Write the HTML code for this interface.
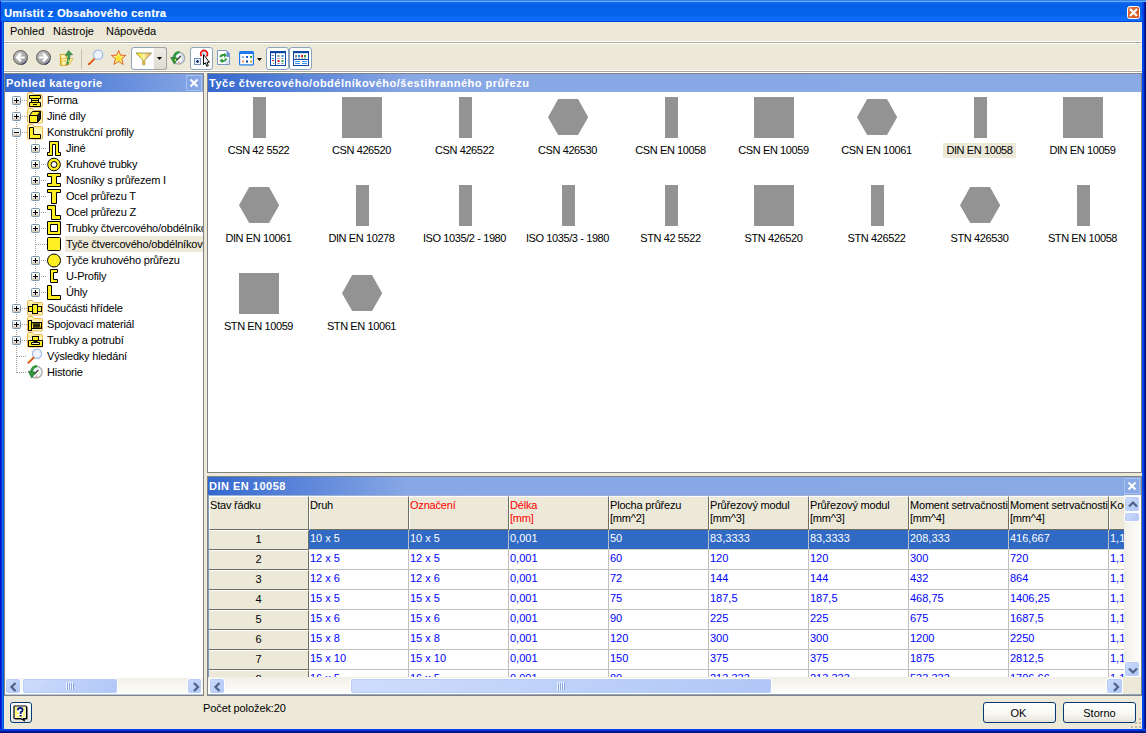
<!DOCTYPE html>
<html><head><meta charset="utf-8">
<style>
*{box-sizing:border-box;margin:0;padding:0}
html,body{width:1146px;height:733px;overflow:hidden;background:#ECE9D8;font-family:"Liberation Sans",sans-serif;font-size:11px;color:#000}
.a{position:absolute}
#title{left:0;top:0;width:1146px;height:22px;background:linear-gradient(to bottom,#3C82E6 0,#3C82E6 1px,#64B0FF 1px,#64B0FF 2px,#1A6EF5 2px,#0561E8 4px,#0561E8 15px,#0A6CF8 17px,#0A6CF8 21px,#0046DA 21px,#0046DA 22px)}
#title .t{left:4px;top:5px;color:#fff;font-weight:bold;font-size:11px;line-height:16px;white-space:nowrap;letter-spacing:0.4px;text-shadow:0.5px 0 0 rgba(255,255,255,0.5)}
#fl{left:0;top:22px;width:4px;height:711px;background:linear-gradient(to right,#0012CF 0,#0012CF 1px,#0A2ED5 1px,#0A2ED5 2px,#156DE8 2px,#156DE8 3px,#0055E5 3px)}
#fr{left:1142px;top:2px;width:4px;height:731px;background:linear-gradient(to right,#0048F0 0,#0048F0 1px,#0040E0 1px,#0040E0 2px,#001CA0 2px,#001CA0 3px,#001080 3px)}
#fb{left:0;top:729px;width:1146px;height:4px;background:linear-gradient(to bottom,#0040F0 0,#0040F0 1px,#0038D8 1px,#0038D8 2px,#001890 2px,#001890 3px,#001080 3px)}
.hl{height:1px;left:4px;width:1138px}
.menu span{position:absolute;top:25px;line-height:13px;font-size:11px;white-space:nowrap}
.panel{border:1px solid #828282;background:#fff}
.tt{font-size:11px;line-height:14px;white-space:nowrap;letter-spacing:-0.2px}
.gl{text-align:center;font-size:11px;line-height:14px;white-space:nowrap;letter-spacing:-0.4px}
.hc{background:#ECE9D8;border-top:1px solid #fff;border-left:1px solid #fff;border-right:1px solid #716F64;border-bottom:1px solid #716F64;padding:2px 0 0 0;font-size:11px;line-height:13px;white-space:nowrap;overflow:hidden;letter-spacing:-0.2px}
.rh{background:#ECE9D8;border-top:1px solid #fff;border-right:1px solid #716F64;border-bottom:1px solid #716F64;text-align:center;font-size:11px;line-height:17px;padding-left:0}
.dc{border-right:1px solid #C0C0C0;border-bottom:1px solid #C0C0C0;color:#0000FF;font-size:11px;line-height:16px;padding-left:1px;white-space:nowrap;overflow:hidden;letter-spacing:0}
.dc.sel{background:#316AC5;color:#fff;border-bottom-color:#D8D4C8}
.trh{background:linear-gradient(to bottom,#F1EFE8,#FEFEFB)}
.trv{background:linear-gradient(to right,#F1EFE8,#FEFEFB)}
.sb{border:1px solid #fff;border-radius:3px;background:linear-gradient(135deg,#CFDCFC 0,#BBCFF8 60%,#B0C6F6 100%);box-shadow:inset 0 0 0 1px #B9CCF6}
.xb{border:1px solid #003C74;border-radius:3px;background:linear-gradient(to bottom,#FFFFFF 0,#F6F6F2 60%,#E6E3D8 100%);font-size:11px}
.phdr{left:1px;top:0;height:18px;color:#fff;font-weight:bold;font-size:11px;line-height:18px;padding-left:1px;white-space:nowrap;letter-spacing:0.5px}
</style></head><body>
<div id="title" class="a"><div class="t a">Umístit z Obsahového centra</div></div>
<div id="fl" class="a"></div><div class="a" style="left:0;top:1px;width:1px;height:21px;background:#0A28C8"></div><div id="fr" class="a"></div><div id="fb" class="a"></div>

<!-- menu -->
<div class="menu">
<span style="left:10px">Pohled</span><span style="left:53px">Nástroje</span><span style="left:106px">Nápověda</span>
</div>
<div class="a hl" style="top:41px;background:#fff"></div>
<div class="a hl" style="top:42px;background:#ACA899"></div>
<div class="a hl" style="top:43px;background:#fff"></div>
<div class="a hl" style="top:70px;background:#fff"></div>
<div class="a hl" style="top:71px;background:#ACA899"></div>
<div class="a hl" style="top:72px;background:#fff"></div>


<!-- title close -->
<svg class="a" style="left:1127px;top:6px" width="13" height="13" viewBox="0 0 13 13">
<defs><linearGradient id="cbg" x1="0" y1="0" x2="1" y2="1"><stop offset="0" stop-color="#E8906A"/><stop offset="0.35" stop-color="#D6642C"/><stop offset="0.8" stop-color="#D65A28"/><stop offset="1" stop-color="#F02010"/></linearGradient></defs>
<rect x="0.5" y="0.5" width="12" height="12" rx="2" fill="url(#cbg)" stroke="#fff"/>
<path d="M3.8 3.8 L9.2 9.2 M9.2 3.8 L3.8 9.2" stroke="#fff" stroke-width="2.3" stroke-linecap="square"/>
</svg>

<!-- toolbar -->
<svg class="a" style="left:13px;top:50px" width="16" height="16" viewBox="0 0 16 16">
<defs><radialGradient id="gc" cx="0.35" cy="0.3" r="0.8"><stop offset="0" stop-color="#C4C4C4"/><stop offset="0.6" stop-color="#A6A6A6"/><stop offset="1" stop-color="#8E8E8E"/></radialGradient></defs>
<circle cx="7.5" cy="7.5" r="7" fill="url(#gc)" stroke="#5E5E56" stroke-width="1"/>
<path d="M13.56 11 A7 7 0 0 1 8.7 14.4" stroke="#33406E" stroke-width="1.1" fill="none"/>
<path d="M4.5 7.5 H11.8" stroke="#fff" stroke-width="2"/>
<path d="M8 3.6 L4.1 7.5 L8 11.4" stroke="#fff" stroke-width="2.3" fill="none" stroke-linejoin="miter"/>
</svg>
<svg class="a" style="left:36px;top:50px" width="16" height="16" viewBox="0 0 16 16">
<circle cx="7.5" cy="7.5" r="7" fill="url(#gc)" stroke="#5E5E56" stroke-width="1"/>
<path d="M13.56 11 A7 7 0 0 1 8.7 14.4" stroke="#33406E" stroke-width="1.1" fill="none"/>
<path d="M3.2 7.5 H10.5" stroke="#fff" stroke-width="2"/>
<path d="M7 3.6 L10.9 7.5 L7 11.4" stroke="#fff" stroke-width="2.3" fill="none" stroke-linejoin="miter"/>
</svg>
<svg class="a" style="left:59px;top:49px" width="16" height="18" viewBox="0 0 16 18">
<path d="M1.5 5.5 H7.5 V16.5 H1.5 Z" fill="#FDF6C0" stroke="#D8A828" stroke-width="1.2"/>
<path d="M2.5 9.5 L14 9.5 L10.5 15.5 L2.5 16.5 Z" fill="#FBF3A8" stroke="#E8B848" stroke-width="0.9"/>
<path d="M4 12 H7" stroke="#F0B050" stroke-width="1"/>
<path d="M7.5 15.5 C8 12 9 9 9.2 6 L6.2 6.8 L9.5 1.5 L13.8 5.6 L11 6 C11 9 10 13 9 15.5 Z" fill="#3A9E4A" stroke="#2C6A3A" stroke-width="0.5"/>
<path d="M9.5 11 V13" stroke="#D8E870" stroke-width="0.9"/>
</svg>
<div class="a" style="left:81px;top:49px;width:1px;height:20px;background:#C5C2B2"></div>
<svg class="a" style="left:87px;top:49px" width="18" height="17" viewBox="0 0 18 17">
<circle cx="11.1" cy="5.8" r="4.6" fill="#EEF3FD" stroke="#A4BCE6" stroke-width="1.3"/>
<path d="M2 15 L6.8 10.3" stroke="#D84A18" stroke-width="2.2" stroke-linecap="round"/>
<path d="M1.6 14.3 L6.2 9.8" stroke="#F4E060" stroke-width="0.9"/>
</svg>
<svg class="a" style="left:110px;top:49px" width="17" height="17" viewBox="0 0 17 17">
<defs><radialGradient id="stg" cx="0.5" cy="0.55" r="0.5"><stop offset="0" stop-color="#F6E010"/><stop offset="0.6" stop-color="#FBF080"/><stop offset="1" stop-color="#FFFCE0"/></radialGradient></defs>
<path d="M8.7 1.5 L10.6 6.2 L15.8 6.4 L11.8 9.6 L13.2 15.5 L8.6 12.3 L4 15.5 L5.4 9.6 L1.4 6.4 L6.6 6.2 Z" fill="url(#stg)" stroke="#E4641C" stroke-width="1" stroke-linejoin="round"/>
</svg>
<div class="a" style="left:131px;top:47px;width:36px;height:23px;border:1px solid #8DA3BE;border-radius:3px;background:linear-gradient(to right,#fff 0,#fff 22px,#E3E1D8 22px);overflow:hidden"></div>
<div class="a" style="left:153px;top:47px;width:14px;height:23px;border:1px solid #A3A3A0;border-left:none;border-radius:0 3px 3px 0;background:linear-gradient(to bottom,#EDEBE4,#DEDCD2)"></div>
<div class="a" style="left:153px;top:48px;width:1px;height:21px;background:#FAFAF8"></div>
<svg class="a" style="left:135px;top:52px" width="18" height="14" viewBox="0 0 18 14">
<defs><linearGradient id="fng" x1="0" y1="0" x2="1" y2="0"><stop offset="0" stop-color="#F8E000"/><stop offset="0.5" stop-color="#FAF2A0"/><stop offset="1" stop-color="#E8A040"/></linearGradient></defs>
<path d="M1 1 L16.5 1 L9.8 8.2 L9.8 12.8 L7.8 12.8 L7.8 8.2 Z" fill="url(#fng)" stroke="#6E6420" stroke-width="0.6" stroke-linejoin="round"/>
<rect x="7.9" y="8.2" width="1.8" height="4.5" fill="#E0B030"/>
</svg>
<svg class="a" style="left:157px;top:57px" width="5" height="3" viewBox="0 0 5 3"><path d="M0 0 H5 L2.5 3 Z" fill="#000"/></svg>
<svg class="a" style="left:169px;top:50px" width="17" height="16" viewBox="0 0 17 16">
<circle cx="9.7" cy="8.1" r="5.9" fill="#F2F7FE" stroke="#ABABAB" stroke-width="1.3"/>
<path d="M12 4 A5 5 0 0 1 12.5 12" stroke="#B8D0F0" stroke-width="1.2" fill="none"/>
<path d="M7.6 10.2 L11.8 6" stroke="#3A3A3A" stroke-width="1.3"/>
<circle cx="12.6" cy="8.5" r="0.7" fill="#F4F080"/><circle cx="10" cy="12.3" r="0.7" fill="#E86040"/>
<path d="M10.5 2.2 C7 2.2 5.5 4.5 5.3 8" stroke="#2E9A3C" stroke-width="2.6" fill="none"/>
<path d="M1.5 7.3 L9 8.2 L5.3 14.2 Z" fill="#2E9A3C" stroke="#1E5A28" stroke-width="0.5"/>
<rect x="6" y="9" width="1" height="2" fill="#F0E060"/>
</svg>
<div class="a" style="left:190px;top:47px;width:23px;height:23px;border:1px solid #8DA3BE;border-radius:3px;background:#fff"></div>
<svg class="a" style="left:193px;top:49px" width="19" height="19" viewBox="0 0 19 19">
<path d="M8.6 7.2 A3.4 3.4 0 1 1 13.4 7.4" fill="none" stroke="#F01818" stroke-width="1.8"/>
<circle cx="11" cy="4.8" r="2" fill="#C8DCF4"/>
<rect x="1.5" y="9.5" width="6" height="6" fill="#F0F4FC" stroke="#7890B8" stroke-width="1"/>
<path d="M4.5 11 V14 M3 12.5 H6" stroke="#0A3A8A" stroke-width="1.3"/>
<path d="M10.5 5.5 L10.5 15.5 L12.3 13.8 L13.8 17.3 L15.3 16.7 L13.9 13.3 L16.4 13.3 Z" fill="#fff" stroke="#000" stroke-width="1" stroke-linejoin="miter"/>
</svg>
<svg class="a" style="left:216px;top:50px" width="15" height="16" viewBox="0 0 15 16">
<path d="M1.5 0.5 L10.5 0.5 L13.5 3.5 L13.5 14.5 L1.5 14.5 Z" fill="#fff" stroke="#7A98C4" stroke-width="1"/>
<path d="M10.5 0.5 L13.5 3.5 L13.5 7 L10.5 7 Z" fill="#6A90DC"/>
<path d="M9 10 L13 10 L13 14 L9 14 Z" fill="#D8E4F8"/>
<path d="M3.5 7 C3.5 4.5 6 4 8 4 L8 2.8 L11 5.2 L8 7.8 L8 6 C6.5 6 5.5 6.5 5.5 7.5 Z" fill="#2E9A3C"/>
<path d="M11 8 C11 10.5 8.5 12 6.5 12 L6.5 13.2 L3.5 10.8 L6.5 8.2 L6.5 10 C8 10 9 9.5 9 8.5 Z" fill="#2E9A3C"/>
</svg>
<svg class="a" style="left:238px;top:50px" width="17" height="16" viewBox="0 0 17 16">
<rect x="1" y="1" width="15" height="14.5" rx="1.5" fill="#1E78EC"/>
<rect x="2.2" y="4" width="12.6" height="10.3" fill="#fff"/>
<rect x="4" y="6" width="2" height="2" fill="#9AB0D0"/><rect x="8" y="6" width="2" height="2" fill="#1A60E0"/><rect x="12" y="6" width="2" height="2" fill="#3A9A40"/>
<rect x="4" y="10.5" width="2" height="2" fill="#F0907A"/><rect x="8" y="10.5" width="2" height="2" fill="#0A3A8A"/><rect x="12" y="10.5" width="2" height="2" fill="#D8A828"/>
</svg>
<svg class="a" style="left:257px;top:58px" width="5" height="3" viewBox="0 0 5 3"><path d="M0 0 H5 L2.5 3 Z" fill="#000"/></svg>
<div class="a" style="left:266px;top:47px;width:23px;height:23px;border:1px solid #8DA3BE;border-radius:3px;background:#fff"></div>
<div class="a" style="left:289px;top:47px;width:23px;height:23px;border:1px solid #8DA3BE;border-radius:3px;background:#fff"></div>
<svg class="a" style="left:270px;top:51px" width="16" height="15" viewBox="0 0 16 15">
<rect x="0.5" y="0.5" width="15" height="14" fill="#fff" stroke="#0C48A8" stroke-width="1"/>
<rect x="0" y="0" width="16" height="2.2" fill="#0C48A8"/>
<path d="M5.5 2 V15" stroke="#0C48A8" stroke-width="1"/>
<rect x="1.5" y="4" width="2.5" height="1" fill="#6A7FA8"/><rect x="1.5" y="7" width="2.5" height="1" fill="#3A90F0"/><rect x="2" y="9" width="2" height="1" fill="#E02020"/><rect x="3" y="12" width="1" height="1" fill="#30A030"/>
<rect x="7.5" y="4" width="2" height="2" fill="#7A8CA8"/><rect x="11.5" y="4" width="2" height="2" fill="#2A8AF8"/>
<rect x="7.5" y="7" width="2" height="1" fill="#888"/><rect x="11.5" y="7" width="2" height="1" fill="#888"/>
<rect x="7.5" y="9" width="2" height="2" fill="#E01818"/><rect x="11.5" y="9" width="2" height="2" fill="#30A040"/>
<rect x="7.5" y="12" width="2" height="1" fill="#888"/><rect x="11.5" y="12" width="2" height="1" fill="#888"/>
</svg>
<svg class="a" style="left:293px;top:51px" width="16" height="15" viewBox="0 0 16 15">
<rect x="0.5" y="0.5" width="15" height="14" fill="#fff" stroke="#0C48A8" stroke-width="1"/>
<rect x="0" y="0" width="16" height="2.2" fill="#0C48A8"/>
<path d="M0 8.5 H16" stroke="#0C48A8" stroke-width="1"/>
<rect x="2" y="4" width="2" height="2" fill="#7A8CA8"/><rect x="5" y="4" width="2" height="2" fill="#2A8AF8"/><rect x="8" y="4" width="2" height="2" fill="#E01818"/><rect x="11" y="4" width="2" height="2" fill="#30A040"/>
<rect x="2" y="6.5" width="2" height="1" fill="#888"/><rect x="5" y="6.5" width="2" height="1" fill="#888"/><rect x="8" y="6.5" width="2" height="1" fill="#888"/><rect x="11" y="6.5" width="2" height="1" fill="#888"/>
<rect x="2" y="10" width="5" height="1" fill="#3A90F0"/><rect x="9" y="10" width="5" height="1" fill="#3A90F0"/>
<rect x="2" y="12" width="5" height="1" fill="#3A90F0"/><rect x="9" y="12" width="5" height="1" fill="#3A90F0"/>
</svg>

<!-- left panel -->
<div class="a panel" style="left:4px;top:73px;width:200px;height:623px"></div>
<!-- right top panel -->
<div class="a panel" style="left:207px;top:73px;width:935px;height:400px"></div>
<!-- right bottom panel -->
<div class="a panel" style="left:207px;top:476px;width:935px;height:220px"></div>


<div class="a phdr" style="left:5px;top:74px;width:198px;background:linear-gradient(to right,#3468CF 0,#88A7E5 198px)">Pohled kategorie</div>
<svg class="a" style="left:186px;top:75px" width="16" height="16" viewBox="0 0 16 16"><rect x="0.5" y="0.5" width="15" height="15" fill="none" stroke="#A8C0EE" stroke-width="1"/><path d="M4.5 4.5 L11.5 11.5 M11.5 4.5 L4.5 11.5" stroke="#fff" stroke-width="2"/></svg>
<div class="a phdr" style="left:208px;top:74px;width:933px;background:linear-gradient(to right,#3468CF 0,#88A7E5 200px,#8AAAE6 100%)">Tyče čtvercového/obdélníkového/šestihranného průřezu</div>
<div class="a phdr" style="left:208px;top:477px;width:933px;background:linear-gradient(to right,#3468CF 0,#88A7E5 200px,#8AAAE6 100%)">DIN EN 10058</div>
<svg class="a" style="left:1124px;top:478px" width="16" height="16" viewBox="0 0 16 16"><rect x="0.5" y="0.5" width="15" height="15" fill="none" stroke="#A8C0EE" stroke-width="1"/><path d="M4.5 4.5 L11.5 11.5 M11.5 4.5 L4.5 11.5" stroke="#fff" stroke-width="2"/></svg>
<!-- table -->
<div class="a" style="left:208px;top:495px;width:916px;height:182px;overflow:hidden;background:#fff;border-top:1px solid #9EB2D6;border-left:1px solid #7F9DB9">
<div class="a hc" style="left:0;top:0;width:100px;height:34px">Stav řádku</div>
<div class="a hc" style="left:100px;top:0;width:100px;height:34px;">Druh</div>
<div class="a hc" style="left:200px;top:0;width:100px;height:34px;color:#f00">Označení</div>
<div class="a hc" style="left:300px;top:0;width:100px;height:34px;color:#f00">Délka<br>[mm]</div>
<div class="a hc" style="left:400px;top:0;width:100px;height:34px;">Plocha průřezu<br>[mm^2]</div>
<div class="a hc" style="left:500px;top:0;width:100px;height:34px;">Průřezový modul<br>[mm^3]</div>
<div class="a hc" style="left:600px;top:0;width:100px;height:34px;">Průřezový modul<br>[mm^3]</div>
<div class="a hc" style="left:700px;top:0;width:100px;height:34px;">Moment setrvačnosti<br>[mm^4]</div>
<div class="a hc" style="left:800px;top:0;width:100px;height:34px;">Moment setrvačnosti<br>[mm^4]</div>
<div class="a hc" style="left:900px;top:0;width:100px;height:34px;">Koeficient</div>
<div class="a rh" style="left:0;top:34px;width:100px;height:20px">1</div>
<div class="a dc sel" style="left:100px;top:34px;width:100px;height:20px">10 x 5</div>
<div class="a dc sel" style="left:200px;top:34px;width:100px;height:20px">10 x 5</div>
<div class="a dc sel" style="left:300px;top:34px;width:100px;height:20px">0,001</div>
<div class="a dc sel" style="left:400px;top:34px;width:100px;height:20px">50</div>
<div class="a dc sel" style="left:500px;top:34px;width:100px;height:20px">83,3333</div>
<div class="a dc sel" style="left:600px;top:34px;width:100px;height:20px">83,3333</div>
<div class="a dc sel" style="left:700px;top:34px;width:100px;height:20px">208,333</div>
<div class="a dc sel" style="left:800px;top:34px;width:100px;height:20px">416,667</div>
<div class="a dc sel" style="left:900px;top:34px;width:100px;height:20px">1,1</div>
<div class="a rh" style="left:0;top:54px;width:100px;height:20px">2</div>
<div class="a dc" style="left:100px;top:54px;width:100px;height:20px">12 x 5</div>
<div class="a dc" style="left:200px;top:54px;width:100px;height:20px">12 x 5</div>
<div class="a dc" style="left:300px;top:54px;width:100px;height:20px">0,001</div>
<div class="a dc" style="left:400px;top:54px;width:100px;height:20px">60</div>
<div class="a dc" style="left:500px;top:54px;width:100px;height:20px">120</div>
<div class="a dc" style="left:600px;top:54px;width:100px;height:20px">120</div>
<div class="a dc" style="left:700px;top:54px;width:100px;height:20px">300</div>
<div class="a dc" style="left:800px;top:54px;width:100px;height:20px">720</div>
<div class="a dc" style="left:900px;top:54px;width:100px;height:20px">1,1</div>
<div class="a rh" style="left:0;top:74px;width:100px;height:20px">3</div>
<div class="a dc" style="left:100px;top:74px;width:100px;height:20px">12 x 6</div>
<div class="a dc" style="left:200px;top:74px;width:100px;height:20px">12 x 6</div>
<div class="a dc" style="left:300px;top:74px;width:100px;height:20px">0,001</div>
<div class="a dc" style="left:400px;top:74px;width:100px;height:20px">72</div>
<div class="a dc" style="left:500px;top:74px;width:100px;height:20px">144</div>
<div class="a dc" style="left:600px;top:74px;width:100px;height:20px">144</div>
<div class="a dc" style="left:700px;top:74px;width:100px;height:20px">432</div>
<div class="a dc" style="left:800px;top:74px;width:100px;height:20px">864</div>
<div class="a dc" style="left:900px;top:74px;width:100px;height:20px">1,1</div>
<div class="a rh" style="left:0;top:94px;width:100px;height:20px">4</div>
<div class="a dc" style="left:100px;top:94px;width:100px;height:20px">15 x 5</div>
<div class="a dc" style="left:200px;top:94px;width:100px;height:20px">15 x 5</div>
<div class="a dc" style="left:300px;top:94px;width:100px;height:20px">0,001</div>
<div class="a dc" style="left:400px;top:94px;width:100px;height:20px">75</div>
<div class="a dc" style="left:500px;top:94px;width:100px;height:20px">187,5</div>
<div class="a dc" style="left:600px;top:94px;width:100px;height:20px">187,5</div>
<div class="a dc" style="left:700px;top:94px;width:100px;height:20px">468,75</div>
<div class="a dc" style="left:800px;top:94px;width:100px;height:20px">1406,25</div>
<div class="a dc" style="left:900px;top:94px;width:100px;height:20px">1,1</div>
<div class="a rh" style="left:0;top:114px;width:100px;height:20px">5</div>
<div class="a dc" style="left:100px;top:114px;width:100px;height:20px">15 x 6</div>
<div class="a dc" style="left:200px;top:114px;width:100px;height:20px">15 x 6</div>
<div class="a dc" style="left:300px;top:114px;width:100px;height:20px">0,001</div>
<div class="a dc" style="left:400px;top:114px;width:100px;height:20px">90</div>
<div class="a dc" style="left:500px;top:114px;width:100px;height:20px">225</div>
<div class="a dc" style="left:600px;top:114px;width:100px;height:20px">225</div>
<div class="a dc" style="left:700px;top:114px;width:100px;height:20px">675</div>
<div class="a dc" style="left:800px;top:114px;width:100px;height:20px">1687,5</div>
<div class="a dc" style="left:900px;top:114px;width:100px;height:20px">1,1</div>
<div class="a rh" style="left:0;top:134px;width:100px;height:20px">6</div>
<div class="a dc" style="left:100px;top:134px;width:100px;height:20px">15 x 8</div>
<div class="a dc" style="left:200px;top:134px;width:100px;height:20px">15 x 8</div>
<div class="a dc" style="left:300px;top:134px;width:100px;height:20px">0,001</div>
<div class="a dc" style="left:400px;top:134px;width:100px;height:20px">120</div>
<div class="a dc" style="left:500px;top:134px;width:100px;height:20px">300</div>
<div class="a dc" style="left:600px;top:134px;width:100px;height:20px">300</div>
<div class="a dc" style="left:700px;top:134px;width:100px;height:20px">1200</div>
<div class="a dc" style="left:800px;top:134px;width:100px;height:20px">2250</div>
<div class="a dc" style="left:900px;top:134px;width:100px;height:20px">1,1</div>
<div class="a rh" style="left:0;top:154px;width:100px;height:20px">7</div>
<div class="a dc" style="left:100px;top:154px;width:100px;height:20px">15 x 10</div>
<div class="a dc" style="left:200px;top:154px;width:100px;height:20px">15 x 10</div>
<div class="a dc" style="left:300px;top:154px;width:100px;height:20px">0,001</div>
<div class="a dc" style="left:400px;top:154px;width:100px;height:20px">150</div>
<div class="a dc" style="left:500px;top:154px;width:100px;height:20px">375</div>
<div class="a dc" style="left:600px;top:154px;width:100px;height:20px">375</div>
<div class="a dc" style="left:700px;top:154px;width:100px;height:20px">1875</div>
<div class="a dc" style="left:800px;top:154px;width:100px;height:20px">2812,5</div>
<div class="a dc" style="left:900px;top:154px;width:100px;height:20px">1,1</div>
<div class="a rh" style="left:0;top:174px;width:100px;height:20px">8</div>
<div class="a dc" style="left:100px;top:174px;width:100px;height:20px">16 x 5</div>
<div class="a dc" style="left:200px;top:174px;width:100px;height:20px">16 x 5</div>
<div class="a dc" style="left:300px;top:174px;width:100px;height:20px">0,001</div>
<div class="a dc" style="left:400px;top:174px;width:100px;height:20px">80</div>
<div class="a dc" style="left:500px;top:174px;width:100px;height:20px">213,333</div>
<div class="a dc" style="left:600px;top:174px;width:100px;height:20px">213,333</div>
<div class="a dc" style="left:700px;top:174px;width:100px;height:20px">533,333</div>
<div class="a dc" style="left:800px;top:174px;width:100px;height:20px">1706,66</div>
<div class="a dc" style="left:900px;top:174px;width:100px;height:20px">1,1</div>
</div>
<!-- scrollbars -->
<div class="a trh" style="left:5px;top:678px;width:198px;height:17px"></div>
<div class="a sb" style="left:5px;top:678px;width:16px;height:16px"><svg class="a" style="left:0;top:0" width="16" height="16"><path d="M9.5 4.0 L5.5 8.0 L9.5 12.0" stroke="#4D6185" stroke-width="2.2" fill="none"/></svg></div>
<div class="a sb" style="left:22px;top:678px;width:96px;height:16px"></div>
<svg class="a" style="left:66px;top:682px" width="8" height="8"><path d="M0.5 0 V8 M2.5 0 V8 M4.5 0 V8 M6.5 0 V8" stroke="#EEF4FE" stroke-width="1"/><path d="M1.5 1 V9 M3.5 1 V9 M5.5 1 V9 M7.5 1 V9" stroke="#8CA8DE" stroke-width="1"/></svg>
<div class="a sb" style="left:187px;top:678px;width:15px;height:16px"><svg class="a" style="left:0;top:0" width="15" height="16"><path d="M6.0 4.0 L10.0 8.0 L6.0 12.0" stroke="#4D6185" stroke-width="2.2" fill="none"/></svg></div>
<div class="a trv" style="left:1124px;top:495px;width:17px;height:182px"></div>
<div class="a sb" style="left:1124px;top:496px;width:16px;height:16px"><svg class="a" style="left:0;top:0" width="16" height="16"><path d="M4.0 9.5 L8.0 5.5 L12.0 9.5" stroke="#4D6185" stroke-width="2.2" fill="none"/></svg></div>
<div class="a sb" style="left:1124px;top:512px;width:16px;height:10px"></div>
<div class="a sb" style="left:1124px;top:661px;width:16px;height:16px"><svg class="a" style="left:0;top:0" width="16" height="16"><path d="M4.0 6.5 L8.0 10.5 L12.0 6.5" stroke="#4D6185" stroke-width="2.2" fill="none"/></svg></div>
<div class="a trh" style="left:208px;top:677px;width:916px;height:17px"></div>
<div class="a sb" style="left:209px;top:678px;width:16px;height:16px"><svg class="a" style="left:0;top:0" width="16" height="16"><path d="M9.5 4.0 L5.5 8.0 L9.5 12.0" stroke="#4D6185" stroke-width="2.2" fill="none"/></svg></div>
<div class="a sb" style="left:350px;top:678px;width:422px;height:16px"></div>
<svg class="a" style="left:557px;top:682px" width="8" height="8"><path d="M0.5 0 V8 M2.5 0 V8 M4.5 0 V8 M6.5 0 V8" stroke="#EEF4FE" stroke-width="1"/><path d="M1.5 1 V9 M3.5 1 V9 M5.5 1 V9 M7.5 1 V9" stroke="#8CA8DE" stroke-width="1"/></svg>
<div class="a sb" style="left:1106px;top:678px;width:17px;height:16px"><svg class="a" style="left:0;top:0" width="17" height="16"><path d="M7.0 4.0 L11.0 8.0 L7.0 12.0" stroke="#4D6185" stroke-width="2.2" fill="none"/></svg></div>
<div class="a" style="left:1123px;top:677px;width:18px;height:18px;background:#ECE9D8"></div>
<div class="a" style="left:208px;top:694px;width:933px;height:1px;background:#8FA4C4"></div>
<div class="a" style="left:5px;top:694px;width:198px;height:1px;background:#B8C8E8"></div>
<!-- bottom -->
<div class="a xb" style="left:10px;top:702px;width:22px;height:21px"></div>
<svg class="a" style="left:13px;top:705px" width="16" height="17" viewBox="0 0 16 17">
<path d="M2 1.5 H13.5 Q14.5 1.5 14.5 2.5 V13.5 Q14.5 14.5 13.5 14.5 H11.5 L12 16 L9 14.5 H2.5 Q1.5 14.5 1.5 13.5 V2.5 Q1.5 1.5 2.5 1.5 Z" fill="#222" />
<path d="M1.5 1 H12.5 Q13.5 1 13.5 2 V12.5 Q13.5 13.5 12.5 13.5 H10.5 L11 15.5 L8 13.5 H2 Q1 13.5 1 12.5 V2 Q1 1 2 1 Z" fill="#fff" stroke="#000" stroke-width="1.2"/>
<g fill="#FFF000"><circle cx="3" cy="3" r="0.9"/><circle cx="3" cy="5" r="0.85"/><circle cx="3" cy="7" r="0.85"/><circle cx="3" cy="9" r="0.85"/><circle cx="3" cy="11" r="0.85"/><circle cx="5" cy="4" r="0.85"/><circle cx="5" cy="8" r="0.85"/><circle cx="5" cy="12" r="0.85"/><circle cx="7" cy="3" r="0.85"/><circle cx="7" cy="11" r="0.85"/><circle cx="9" cy="4" r="0.85"/><circle cx="9" cy="12" r="0.85"/><circle cx="11" cy="3" r="0.85"/><circle cx="11" cy="5" r="0.85"/><circle cx="11" cy="7" r="0.85"/><circle cx="11" cy="9" r="0.85"/><circle cx="11" cy="11" r="0.85"/></g>
<path d="M4.8 5.2 Q4.8 3 7.2 3 Q9.6 3 9.6 5 Q9.6 6.5 7.8 7.2 L7.6 9" fill="none" stroke="#0A1A8A" stroke-width="1.8"/>
<rect x="6.6" y="10" width="2" height="1.6" fill="#0A1A8A"/>
</svg>
<div class="a" style="left:203px;top:701px;font-size:11px;line-height:14px;white-space:nowrap;letter-spacing:-0.1px">Počet položek:20</div>
<div class="a xb" style="left:983px;top:702px;width:73px;height:21px;text-align:center;line-height:21px;padding-right:2px">OK</div>
<div class="a xb" style="left:1063px;top:702px;width:73px;height:21px;text-align:center;line-height:21px">Storno</div>
<div class="a" style="left:1139px;top:718px;width:2px;height:2px;background:#BDB9A6"></div>
<div class="a" style="left:1139px;top:722px;width:2px;height:2px;background:#BDB9A6"></div>
<div class="a" style="left:1135px;top:722px;width:2px;height:2px;background:#BDB9A6"></div>
<div class="a" style="left:1139px;top:726px;width:2px;height:2px;background:#BDB9A6"></div>
<div class="a" style="left:1135px;top:726px;width:2px;height:2px;background:#BDB9A6"></div>
<div class="a" style="left:1131px;top:726px;width:2px;height:2px;background:#BDB9A6"></div>
<!-- grid -->
<div class="a" style="left:252.5px;top:97px;width:13px;height:41px;background:#939393"></div>
<div class="a gl" style="left:198.5px;top:143px;width:120px"><span style="display:inline-block;height:15px">CSN 42 5522</span></div>
<div class="a" style="left:342.0px;top:97px;width:40px;height:41px;background:#939393"></div>
<div class="a gl" style="left:301.5px;top:143px;width:120px"><span style="display:inline-block;height:15px">CSN 426520</span></div>
<div class="a" style="left:458.5px;top:97px;width:13px;height:41px;background:#939393"></div>
<div class="a gl" style="left:404.5px;top:143px;width:120px"><span style="display:inline-block;height:15px">CSN 426522</span></div>
<svg class="a" style="left:547.5px;top:98.8px" width="41" height="37" viewBox="0 0 41 37"><polygon points="0,18.2 10.2,0 30,0 40.2,18.2 30,36 10.2,36" fill="#939393"/></svg>
<div class="a gl" style="left:507.5px;top:143px;width:120px"><span style="display:inline-block;height:15px">CSN 426530</span></div>
<div class="a" style="left:664.5px;top:97px;width:13px;height:41px;background:#939393"></div>
<div class="a gl" style="left:610.5px;top:143px;width:120px"><span style="display:inline-block;height:15px">CSN EN 10058</span></div>
<div class="a" style="left:754.0px;top:97px;width:40px;height:41px;background:#939393"></div>
<div class="a gl" style="left:713.5px;top:143px;width:120px"><span style="display:inline-block;height:15px">CSN EN 10059</span></div>
<svg class="a" style="left:856.5px;top:98.8px" width="41" height="37" viewBox="0 0 41 37"><polygon points="0,18.2 10.2,0 30,0 40.2,18.2 30,36 10.2,36" fill="#939393"/></svg>
<div class="a gl" style="left:816.5px;top:143px;width:120px"><span style="display:inline-block;height:15px">CSN EN 10061</span></div>
<div class="a" style="left:973.5px;top:97px;width:13px;height:41px;background:#939393"></div>
<div class="a gl" style="left:919.5px;top:143px;width:120px"><span style="display:inline-block;height:15px;background:#ECE9D8;padding:0 3px">DIN EN 10058</span></div>
<div class="a" style="left:1063.0px;top:97px;width:40px;height:41px;background:#939393"></div>
<div class="a gl" style="left:1022.5px;top:143px;width:120px"><span style="display:inline-block;height:15px">DIN EN 10059</span></div>
<svg class="a" style="left:238.5px;top:186.8px" width="41" height="37" viewBox="0 0 41 37"><polygon points="0,18.2 10.2,0 30,0 40.2,18.2 30,36 10.2,36" fill="#939393"/></svg>
<div class="a gl" style="left:198.5px;top:231px;width:120px"><span style="display:inline-block;height:15px">DIN EN 10061</span></div>
<div class="a" style="left:355.5px;top:185px;width:13px;height:41px;background:#939393"></div>
<div class="a gl" style="left:301.5px;top:231px;width:120px"><span style="display:inline-block;height:15px">DIN EN 10278</span></div>
<div class="a" style="left:458.5px;top:185px;width:13px;height:41px;background:#939393"></div>
<div class="a gl" style="left:404.5px;top:231px;width:120px"><span style="display:inline-block;height:15px">ISO 1035/2 - 1980</span></div>
<div class="a" style="left:561.5px;top:185px;width:13px;height:41px;background:#939393"></div>
<div class="a gl" style="left:507.5px;top:231px;width:120px"><span style="display:inline-block;height:15px">ISO 1035/3 - 1980</span></div>
<div class="a" style="left:664.5px;top:185px;width:13px;height:41px;background:#939393"></div>
<div class="a gl" style="left:610.5px;top:231px;width:120px"><span style="display:inline-block;height:15px">STN 42 5522</span></div>
<div class="a" style="left:754.0px;top:185px;width:40px;height:41px;background:#939393"></div>
<div class="a gl" style="left:713.5px;top:231px;width:120px"><span style="display:inline-block;height:15px">STN 426520</span></div>
<div class="a" style="left:870.5px;top:185px;width:13px;height:41px;background:#939393"></div>
<div class="a gl" style="left:816.5px;top:231px;width:120px"><span style="display:inline-block;height:15px">STN 426522</span></div>
<svg class="a" style="left:959.5px;top:186.8px" width="41" height="37" viewBox="0 0 41 37"><polygon points="0,18.2 10.2,0 30,0 40.2,18.2 30,36 10.2,36" fill="#939393"/></svg>
<div class="a gl" style="left:919.5px;top:231px;width:120px"><span style="display:inline-block;height:15px">STN 426530</span></div>
<div class="a" style="left:1076.5px;top:185px;width:13px;height:41px;background:#939393"></div>
<div class="a gl" style="left:1022.5px;top:231px;width:120px"><span style="display:inline-block;height:15px">STN EN 10058</span></div>
<div class="a" style="left:239.0px;top:273px;width:40px;height:41px;background:#939393"></div>
<div class="a gl" style="left:198.5px;top:319px;width:120px"><span style="display:inline-block;height:15px">STN EN 10059</span></div>
<svg class="a" style="left:341.5px;top:274.8px" width="41" height="37" viewBox="0 0 41 37"><polygon points="0,18.2 10.2,0 30,0 40.2,18.2 30,36 10.2,36" fill="#939393"/></svg>
<div class="a gl" style="left:301.5px;top:319px;width:120px"><span style="display:inline-block;height:15px">STN EN 10061</span></div>
<!-- tree --><div class="a" style="left:0;top:0;width:203px;height:677px;overflow:hidden">
<svg width="0" height="0" style="position:absolute"><defs><linearGradient id="pbg" x1="0" y1="0" x2="0" y2="1"><stop offset="0" stop-color="#fff"/><stop offset="0.5" stop-color="#F4F2EC"/><stop offset="1" stop-color="#C8C0AC"/></linearGradient></defs></svg>
<div class="a" style="left:16px;top:100px;width:1px;height:273px;background:repeating-linear-gradient(to bottom,#A0A0A0 0,#A0A0A0 1px,transparent 1px,transparent 2px)"></div>
<div class="a" style="left:35px;top:140px;width:1px;height:153px;background:repeating-linear-gradient(to bottom,#A0A0A0 0,#A0A0A0 1px,transparent 1px,transparent 2px)"></div>
<svg class="a" style="left:12px;top:96px" width="9" height="9" viewBox="0 0 9 9"><rect x="0.5" y="0.5" width="8" height="8" rx="1" fill="url(#pbg)" stroke="#7A97B0"/><path d="M2 4.5 H7" stroke="#000" stroke-width="1"/><path d="M4.5 2 V7" stroke="#000" stroke-width="1"/></svg>
<div class="a" style="left:22px;top:100px;width:5px;height:1px;background:repeating-linear-gradient(to right,#A0A0A0 0,#A0A0A0 1px,transparent 1px,transparent 2px)"></div>
<svg class="a" style="left:27px;top:92px" width="17" height="16" viewBox="0 0 17 16">
<path d="M0.5 2 Q0.5 0.5 2 0.5 L5.5 0.5 L7 2.5 L14.5 2.5 Q15.5 2.5 15.5 3.5 L15.5 14 Q15.5 15 14.5 15 L1.5 15 Q0.5 15 0.5 14 Z" fill="#FFF6BC" stroke="#E9B650" stroke-width="1"/>
<path d="M1 4 H15" stroke="#F8DC78" stroke-width="1"/>
<path d="M2.5 3.5 H13.5 V6.5 H11.5 V10.5 H13.5 V14.5 H2.5 V10.5 H4.5 V6.5 H2.5 Z" fill="#FFEE22" stroke="#000" stroke-width="1" stroke-linejoin="miter"/><path d="M4.5 6.5 H11.5 M4.5 8.5 H11.5 M4.5 10.5 H11.5" stroke="#000" stroke-width="1" stroke-linejoin="miter"/><path d="M6 12.5 H10" stroke="#000" stroke-width="1"/></svg>
<div class="a tt" style="left:47px;top:93px">Forma</div>
<svg class="a" style="left:12px;top:112px" width="9" height="9" viewBox="0 0 9 9"><rect x="0.5" y="0.5" width="8" height="8" rx="1" fill="url(#pbg)" stroke="#7A97B0"/><path d="M2 4.5 H7" stroke="#000" stroke-width="1"/><path d="M4.5 2 V7" stroke="#000" stroke-width="1"/></svg>
<div class="a" style="left:22px;top:116px;width:5px;height:1px;background:repeating-linear-gradient(to right,#A0A0A0 0,#A0A0A0 1px,transparent 1px,transparent 2px)"></div>
<svg class="a" style="left:27px;top:108px" width="17" height="16" viewBox="0 0 17 16">
<path d="M0.5 2 Q0.5 0.5 2 0.5 L5.5 0.5 L7 2.5 L14.5 2.5 Q15.5 2.5 15.5 3.5 L15.5 14 Q15.5 15 14.5 15 L1.5 15 Q0.5 15 0.5 14 Z" fill="#FFF6BC" stroke="#E9B650" stroke-width="1"/>
<path d="M1 4 H15" stroke="#F8DC78" stroke-width="1"/>
<path d="M2.5 7.5 L5.5 3.5 H13.5 V10.5 L10.5 14.5 H2.5 Z" fill="#FFEE22" stroke="#000" stroke-width="1" stroke-linejoin="miter"/><path d="M10.5 7.5 L13.5 3.5 V10.5 L10.5 14.5 Z" fill="#222" stroke="#000" stroke-width="1" stroke-linejoin="miter"/><path d="M2.5 7.5 H10.5" stroke="#000" stroke-width="1" stroke-linejoin="miter"/></svg>
<div class="a tt" style="left:47px;top:109px">Jiné díly</div>
<svg class="a" style="left:12px;top:128px" width="9" height="9" viewBox="0 0 9 9"><rect x="0.5" y="0.5" width="8" height="8" rx="1" fill="url(#pbg)" stroke="#7A97B0"/><path d="M2 4.5 H7" stroke="#000" stroke-width="1"/></svg>
<div class="a" style="left:22px;top:132px;width:5px;height:1px;background:repeating-linear-gradient(to right,#A0A0A0 0,#A0A0A0 1px,transparent 1px,transparent 2px)"></div>
<svg class="a" style="left:27px;top:124px" width="17" height="16" viewBox="0 0 17 16">
<path d="M0.5 2 Q0.5 0.5 2 0.5 L5.5 0.5 L7 2.5 L14.5 2.5 Q15.5 2.5 15.5 3.5 L15.5 14 Q15.5 15 14.5 15 L1.5 15 Q0.5 15 0.5 14 Z" fill="#FFF6BC" stroke="#E9B650" stroke-width="1"/>
<path d="M1 4 H15" stroke="#F8DC78" stroke-width="1"/>
<path d="M2.5 3.5 H6.5 V10.5 H13.5 V14.5 H2.5 Z" fill="#FFEE22" stroke="#000" stroke-width="1" stroke-linejoin="miter"/></svg>
<div class="a tt" style="left:47px;top:125px">Konstrukční profily</div>
<svg class="a" style="left:31px;top:144px" width="9" height="9" viewBox="0 0 9 9"><rect x="0.5" y="0.5" width="8" height="8" rx="1" fill="url(#pbg)" stroke="#7A97B0"/><path d="M2 4.5 H7" stroke="#000" stroke-width="1"/><path d="M4.5 2 V7" stroke="#000" stroke-width="1"/></svg>
<div class="a" style="left:41px;top:148px;width:6px;height:1px;background:repeating-linear-gradient(to right,#A0A0A0 0,#A0A0A0 1px,transparent 1px,transparent 2px)"></div>
<svg class="a" style="left:47px;top:141px" width="16" height="16" viewBox="0 0 16 16"><path d="M2.5 0.5 H11.5 V11.5 H13.5 V14.5 H8.5 V3.5 H5.5 V14.5 H0.5 V11.5 H2.5 Z" fill="#FFEE22" stroke="#000" stroke-width="1" stroke-linejoin="miter"/></svg>
<div class="a tt" style="left:66px;top:141px">Jiné</div>
<svg class="a" style="left:31px;top:160px" width="9" height="9" viewBox="0 0 9 9"><rect x="0.5" y="0.5" width="8" height="8" rx="1" fill="url(#pbg)" stroke="#7A97B0"/><path d="M2 4.5 H7" stroke="#000" stroke-width="1"/><path d="M4.5 2 V7" stroke="#000" stroke-width="1"/></svg>
<div class="a" style="left:41px;top:164px;width:6px;height:1px;background:repeating-linear-gradient(to right,#A0A0A0 0,#A0A0A0 1px,transparent 1px,transparent 2px)"></div>
<svg class="a" style="left:47px;top:157px" width="16" height="16" viewBox="0 0 16 16"><circle cx="7" cy="7.5" r="6.3" fill="#FFEE22" stroke="#000" stroke-width="1" stroke-linejoin="miter"/><circle cx="7" cy="7.5" r="3" fill="#fff" stroke="#000" stroke-width="1" stroke-linejoin="miter"/></svg>
<div class="a tt" style="left:66px;top:157px">Kruhové trubky</div>
<svg class="a" style="left:31px;top:176px" width="9" height="9" viewBox="0 0 9 9"><rect x="0.5" y="0.5" width="8" height="8" rx="1" fill="url(#pbg)" stroke="#7A97B0"/><path d="M2 4.5 H7" stroke="#000" stroke-width="1"/><path d="M4.5 2 V7" stroke="#000" stroke-width="1"/></svg>
<div class="a" style="left:41px;top:180px;width:6px;height:1px;background:repeating-linear-gradient(to right,#A0A0A0 0,#A0A0A0 1px,transparent 1px,transparent 2px)"></div>
<svg class="a" style="left:47px;top:173px" width="16" height="16" viewBox="0 0 16 16"><path d="M0.5 0.5 H13.5 V3.5 H9.5 V10.5 H13.5 V13.5 H0.5 V10.5 H4.5 V3.5 H0.5 Z" fill="#FFEE22" stroke="#000" stroke-width="1" stroke-linejoin="miter"/></svg>
<div class="a tt" style="left:66px;top:173px">Nosníky s průřezem I</div>
<svg class="a" style="left:31px;top:192px" width="9" height="9" viewBox="0 0 9 9"><rect x="0.5" y="0.5" width="8" height="8" rx="1" fill="url(#pbg)" stroke="#7A97B0"/><path d="M2 4.5 H7" stroke="#000" stroke-width="1"/><path d="M4.5 2 V7" stroke="#000" stroke-width="1"/></svg>
<div class="a" style="left:41px;top:196px;width:6px;height:1px;background:repeating-linear-gradient(to right,#A0A0A0 0,#A0A0A0 1px,transparent 1px,transparent 2px)"></div>
<svg class="a" style="left:47px;top:189px" width="16" height="16" viewBox="0 0 16 16"><path d="M0.5 0.5 H13.5 V3.5 H9.5 V14.5 H4.5 V3.5 H0.5 Z" fill="#FFEE22" stroke="#000" stroke-width="1" stroke-linejoin="miter"/></svg>
<div class="a tt" style="left:66px;top:189px">Ocel průřezu T</div>
<svg class="a" style="left:31px;top:208px" width="9" height="9" viewBox="0 0 9 9"><rect x="0.5" y="0.5" width="8" height="8" rx="1" fill="url(#pbg)" stroke="#7A97B0"/><path d="M2 4.5 H7" stroke="#000" stroke-width="1"/><path d="M4.5 2 V7" stroke="#000" stroke-width="1"/></svg>
<div class="a" style="left:41px;top:212px;width:6px;height:1px;background:repeating-linear-gradient(to right,#A0A0A0 0,#A0A0A0 1px,transparent 1px,transparent 2px)"></div>
<svg class="a" style="left:47px;top:205px" width="16" height="16" viewBox="0 0 16 16"><path d="M0.5 0.5 H8.5 V10.5 H13.5 V14.5 H4.5 V4.5 H0.5 Z" fill="#FFEE22" stroke="#000" stroke-width="1" stroke-linejoin="miter"/></svg>
<div class="a tt" style="left:66px;top:205px">Ocel průřezu Z</div>
<svg class="a" style="left:31px;top:224px" width="9" height="9" viewBox="0 0 9 9"><rect x="0.5" y="0.5" width="8" height="8" rx="1" fill="url(#pbg)" stroke="#7A97B0"/><path d="M2 4.5 H7" stroke="#000" stroke-width="1"/><path d="M4.5 2 V7" stroke="#000" stroke-width="1"/></svg>
<div class="a" style="left:41px;top:228px;width:6px;height:1px;background:repeating-linear-gradient(to right,#A0A0A0 0,#A0A0A0 1px,transparent 1px,transparent 2px)"></div>
<svg class="a" style="left:47px;top:221px" width="16" height="16" viewBox="0 0 16 16"><path d="M0.5 0.5 H13.5 V13.5 H0.5 Z M3.5 3.5 V10.5 H10.5 V3.5 Z" fill="#FFEE22" fill-rule="evenodd" stroke="#000" stroke-width="1" stroke-linejoin="miter"/></svg>
<div class="a tt" style="left:66px;top:221px">Trubky čtvercového/obdélníkového</div>
<div class="a" style="left:36px;top:244px;width:11px;height:1px;background:repeating-linear-gradient(to right,#A0A0A0 0,#A0A0A0 1px,transparent 1px,transparent 2px)"></div>
<svg class="a" style="left:47px;top:237px" width="16" height="16" viewBox="0 0 16 16"><rect x="0.5" y="0.5" width="13" height="13" rx="1" fill="#FFEE22" stroke="#000" stroke-width="1" stroke-linejoin="miter"/></svg>
<div class="a" style="left:65px;top:236px;width:138px;height:16px;background:#ECE9D8"></div>
<div class="a tt" style="left:66px;top:237px">Tyče čtvercového/obdélníkového</div>
<svg class="a" style="left:31px;top:256px" width="9" height="9" viewBox="0 0 9 9"><rect x="0.5" y="0.5" width="8" height="8" rx="1" fill="url(#pbg)" stroke="#7A97B0"/><path d="M2 4.5 H7" stroke="#000" stroke-width="1"/><path d="M4.5 2 V7" stroke="#000" stroke-width="1"/></svg>
<div class="a" style="left:41px;top:260px;width:6px;height:1px;background:repeating-linear-gradient(to right,#A0A0A0 0,#A0A0A0 1px,transparent 1px,transparent 2px)"></div>
<svg class="a" style="left:47px;top:253px" width="16" height="16" viewBox="0 0 16 16"><circle cx="7" cy="7.5" r="6.5" fill="#FFEE22" stroke="#000" stroke-width="1" stroke-linejoin="miter"/></svg>
<div class="a tt" style="left:66px;top:253px">Tyče kruhového průřezu</div>
<svg class="a" style="left:31px;top:272px" width="9" height="9" viewBox="0 0 9 9"><rect x="0.5" y="0.5" width="8" height="8" rx="1" fill="url(#pbg)" stroke="#7A97B0"/><path d="M2 4.5 H7" stroke="#000" stroke-width="1"/><path d="M4.5 2 V7" stroke="#000" stroke-width="1"/></svg>
<div class="a" style="left:41px;top:276px;width:6px;height:1px;background:repeating-linear-gradient(to right,#A0A0A0 0,#A0A0A0 1px,transparent 1px,transparent 2px)"></div>
<svg class="a" style="left:47px;top:269px" width="16" height="16" viewBox="0 0 16 16"><path d="M3.5 0.5 H10.5 V3.5 H6.5 V10.5 H10.5 V13.5 H3.5 Z" fill="#FFEE22" stroke="#000" stroke-width="1" stroke-linejoin="miter"/></svg>
<div class="a tt" style="left:66px;top:269px">U-Profily</div>
<svg class="a" style="left:31px;top:288px" width="9" height="9" viewBox="0 0 9 9"><rect x="0.5" y="0.5" width="8" height="8" rx="1" fill="url(#pbg)" stroke="#7A97B0"/><path d="M2 4.5 H7" stroke="#000" stroke-width="1"/><path d="M4.5 2 V7" stroke="#000" stroke-width="1"/></svg>
<div class="a" style="left:41px;top:292px;width:6px;height:1px;background:repeating-linear-gradient(to right,#A0A0A0 0,#A0A0A0 1px,transparent 1px,transparent 2px)"></div>
<svg class="a" style="left:47px;top:285px" width="16" height="16" viewBox="0 0 16 16"><path d="M0.5 0.5 H4.5 V10.5 H13.5 V14.5 H0.5 Z" fill="#FFEE22" stroke="#000" stroke-width="1" stroke-linejoin="miter"/></svg>
<div class="a tt" style="left:66px;top:285px">Úhly</div>
<svg class="a" style="left:12px;top:304px" width="9" height="9" viewBox="0 0 9 9"><rect x="0.5" y="0.5" width="8" height="8" rx="1" fill="url(#pbg)" stroke="#7A97B0"/><path d="M2 4.5 H7" stroke="#000" stroke-width="1"/><path d="M4.5 2 V7" stroke="#000" stroke-width="1"/></svg>
<div class="a" style="left:22px;top:308px;width:5px;height:1px;background:repeating-linear-gradient(to right,#A0A0A0 0,#A0A0A0 1px,transparent 1px,transparent 2px)"></div>
<svg class="a" style="left:27px;top:300px" width="17" height="16" viewBox="0 0 17 16">
<path d="M0.5 2 Q0.5 0.5 2 0.5 L5.5 0.5 L7 2.5 L14.5 2.5 Q15.5 2.5 15.5 3.5 L15.5 14 Q15.5 15 14.5 15 L1.5 15 Q0.5 15 0.5 14 Z" fill="#FFF6BC" stroke="#E9B650" stroke-width="1"/>
<path d="M1 4 H15" stroke="#F8DC78" stroke-width="1"/>
<rect x="1.5" y="6.5" width="13" height="5" fill="#FFEE22" stroke="#000" stroke-width="1" stroke-linejoin="miter"/><rect x="5.5" y="4.5" width="5" height="9" fill="#FFEE22" stroke="#000" stroke-width="1" stroke-linejoin="miter"/></svg>
<div class="a tt" style="left:47px;top:301px">Součásti hřídele</div>
<svg class="a" style="left:12px;top:320px" width="9" height="9" viewBox="0 0 9 9"><rect x="0.5" y="0.5" width="8" height="8" rx="1" fill="url(#pbg)" stroke="#7A97B0"/><path d="M2 4.5 H7" stroke="#000" stroke-width="1"/><path d="M4.5 2 V7" stroke="#000" stroke-width="1"/></svg>
<div class="a" style="left:22px;top:324px;width:5px;height:1px;background:repeating-linear-gradient(to right,#A0A0A0 0,#A0A0A0 1px,transparent 1px,transparent 2px)"></div>
<svg class="a" style="left:27px;top:316px" width="17" height="16" viewBox="0 0 17 16">
<path d="M0.5 2 Q0.5 0.5 2 0.5 L5.5 0.5 L7 2.5 L14.5 2.5 Q15.5 2.5 15.5 3.5 L15.5 14 Q15.5 15 14.5 15 L1.5 15 Q0.5 15 0.5 14 Z" fill="#FFF6BC" stroke="#E9B650" stroke-width="1"/>
<path d="M1 4 H15" stroke="#F8DC78" stroke-width="1"/>
<rect x="4.5" y="6.5" width="10" height="6" fill="#FFEE22" stroke="#000" stroke-width="1" stroke-linejoin="miter"/><rect x="1.5" y="4.5" width="3" height="10" fill="#FFEE22" stroke="#000" stroke-width="1" stroke-linejoin="miter"/><path d="M6 7 L7 12 L8 7 L9 12 L10 7 L11 12 L12 7 L13 12" fill="none" stroke="#000" stroke-width="0.9"/></svg>
<div class="a tt" style="left:47px;top:317px">Spojovací materiál</div>
<svg class="a" style="left:12px;top:336px" width="9" height="9" viewBox="0 0 9 9"><rect x="0.5" y="0.5" width="8" height="8" rx="1" fill="url(#pbg)" stroke="#7A97B0"/><path d="M2 4.5 H7" stroke="#000" stroke-width="1"/><path d="M4.5 2 V7" stroke="#000" stroke-width="1"/></svg>
<div class="a" style="left:22px;top:340px;width:5px;height:1px;background:repeating-linear-gradient(to right,#A0A0A0 0,#A0A0A0 1px,transparent 1px,transparent 2px)"></div>
<svg class="a" style="left:27px;top:332px" width="17" height="16" viewBox="0 0 17 16">
<path d="M0.5 2 Q0.5 0.5 2 0.5 L5.5 0.5 L7 2.5 L14.5 2.5 Q15.5 2.5 15.5 3.5 L15.5 14 Q15.5 15 14.5 15 L1.5 15 Q0.5 15 0.5 14 Z" fill="#FFF6BC" stroke="#E9B650" stroke-width="1"/>
<path d="M1 4 H15" stroke="#F8DC78" stroke-width="1"/>
<rect x="5.5" y="4.5" width="6" height="4" fill="#FFEE22" stroke="#000" stroke-width="1" stroke-linejoin="miter"/><path d="M1.5 8.5 H15.5 V14.5 H1.5 Z M4.5 10.5 V12.5 H12.5 V10.5 Z" fill="#FFEE22" fill-rule="evenodd" stroke="#000" stroke-width="1" stroke-linejoin="miter"/><rect x="6.5" y="8.5" width="4" height="2" fill="#000"/></svg>
<div class="a tt" style="left:47px;top:333px">Trubky a potrubí</div>
<div class="a" style="left:17px;top:356px;width:10px;height:1px;background:repeating-linear-gradient(to right,#A0A0A0 0,#A0A0A0 1px,transparent 1px,transparent 2px)"></div>
<svg class="a" style="left:27px;top:348px" width="16" height="16" viewBox="0 0 16 16"><circle cx="10" cy="5.8" r="4.6" fill="#EEF3FD" stroke="#A4BCE6" stroke-width="1.3"/><path d="M1.5 14.5 L6.3 9.8" stroke="#D84A18" stroke-width="2.2" stroke-linecap="round"/><path d="M1.1 13.8 L5.7 9.3" stroke="#F4E060" stroke-width="0.9"/></svg>
<div class="a tt" style="left:47px;top:349px">Výsledky hledání</div>
<div class="a" style="left:17px;top:372px;width:10px;height:1px;background:repeating-linear-gradient(to right,#A0A0A0 0,#A0A0A0 1px,transparent 1px,transparent 2px)"></div>
<svg class="a" style="left:27px;top:364px" width="16" height="16" viewBox="0 0 16 16"><circle cx="9.2" cy="8.1" r="5.9" fill="#F2F7FE" stroke="#ABABAB" stroke-width="1.3"/><path d="M7.1 10.2 L11.3 6" stroke="#3A3A3A" stroke-width="1.3"/><circle cx="12.1" cy="8.5" r="0.7" fill="#F4F080"/><circle cx="9.5" cy="12.3" r="0.7" fill="#E86040"/><path d="M10 2.2 C6.5 2.2 5 4.5 4.8 8" stroke="#2E9A3C" stroke-width="2.6" fill="none"/><path d="M1 7.3 L8.5 8.2 L4.8 14.2 Z" fill="#2E9A3C" stroke="#1E5A28" stroke-width="0.5"/></svg>
<div class="a tt" style="left:47px;top:365px">Historie</div>
</div>
</body></html>
